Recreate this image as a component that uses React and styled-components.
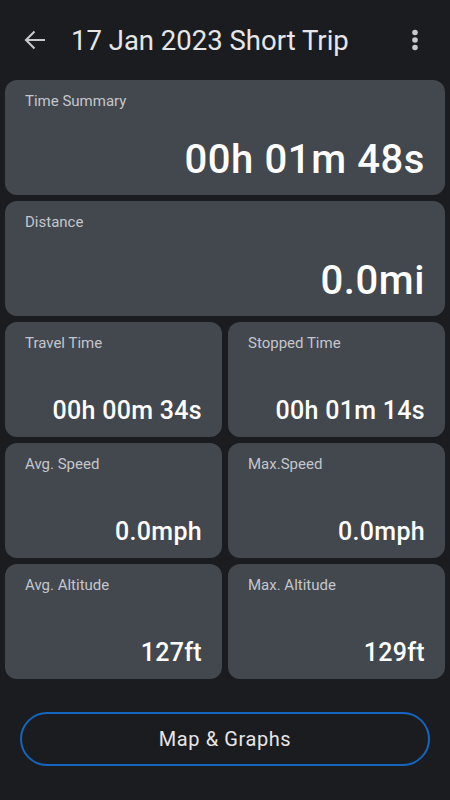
import styled, { createGlobalStyle } from "styled-components";

const GlobalStyle = createGlobalStyle`
  html, body {
    margin: 0;
    padding: 0;
    background: #1b1c1f;
  }
  body {
    font-family: Roboto, "Noto Sans", sans-serif;
  }
`;

const stats = [
  { label: "Travel Time", value: "00h 00m 34s" },
  { label: "Stopped Time", value: "00h 01m 14s" },
  { label: "Avg. Speed", value: "0.0mph" },
  { label: "Max.Speed", value: "0.0mph" },
  { label: "Avg. Altitude", value: "127ft" },
  { label: "Max. Altitude", value: "129ft" },
];

const App = () => {
  return (
    <Screen>
      <GlobalStyle />
      <TopBar>
        <IconButton aria-label="back">
          <svg width="22" height="20" viewBox="0 0 22 20" fill="none">
            <path
              d="M21 10H2.5M10.5 1.5L2 10l8.5 8.5"
              stroke="#c6c8ce"
              strokeWidth="2.1"
            />
          </svg>
        </IconButton>
        <Title>17 Jan 2023 Short Trip</Title>
        <IconButton aria-label="more">
          <svg width="8" height="24" viewBox="0 0 8 24">
            <circle cx="4" cy="4.5" r="2.8" fill="#c6c8ce" />
            <circle cx="4" cy="12" r="2.8" fill="#c6c8ce" />
            <circle cx="4" cy="19.5" r="2.8" fill="#c6c8ce" />
          </svg>
        </IconButton>
      </TopBar>

      <Cards>
        <Card $wide>
          <Label>Time Summary</Label>
          <Value $big>00h 01m 48s</Value>
        </Card>
        <Card $wide>
          <Label>Distance</Label>
          <Value $big>0.0mi</Value>
        </Card>
        {stats.map((s) => (
          <Card key={s.label}>
            <Label>{s.label}</Label>
            <Value>{s.value}</Value>
          </Card>
        ))}
      </Cards>

      <Footer>
        <OutlineButton>Map &amp; Graphs</OutlineButton>
      </Footer>
    </Screen>
  );
};

export default App;

const Screen = styled.div`
  width: 450px;
  height: 800px;
  background: #1b1c1f;
  display: flex;
  flex-direction: column;
  overflow: hidden;
`;

const TopBar = styled.header`
  height: 80px;
  display: flex;
  align-items: center;
  padding: 0 31px 0 24px;
  box-sizing: border-box;
`;

const IconButton = styled.button`
  padding: 0;
  border: none;
  background: none;
  display: flex;
  align-items: center;
  justify-content: center;
`;

const Title = styled.h1`
  flex: 1;
  margin: 0 0 0 25px;
  font-size: 27.5px;
  font-weight: 400;
  color: #e6e6e9;
  letter-spacing: 0;
`;

const Cards = styled.div`
  display: grid;
  grid-template-columns: 1fr 1fr;
  gap: 6px;
  padding: 0 5px;
`;

const Card = styled.div`
  grid-column: ${(p) => (p.$wide ? "1 / span 2" : "auto")};
  height: 115px;
  box-sizing: border-box;
  background: #43474e;
  border-radius: 12px;
  padding: 12px 20px ${(p) => (p.$wide ? "15px" : "14px")} 20px;
  display: flex;
  flex-direction: column;
  justify-content: space-between;
`;

const Label = styled.div`
  font-size: 15px;
  color: #c4c6cd;
`;

const Value = styled.div`
  align-self: flex-end;
  font-size: ${(p) => (p.$big ? "40px" : "25px")};
  letter-spacing: ${(p) => (p.$big ? "0.6px" : "0.3px")};
  font-weight: 500;
  color: #ffffff;
  line-height: 1;
`;

const Footer = styled.div`
  padding: 33px 20px 0 20px;
`;

const OutlineButton = styled.button`
  width: 100%;
  height: 54px;
  border: 2px solid #1565c0;
  border-radius: 27px;
  background: transparent;
  color: #e6e6e9;
  font-family: Roboto, "Noto Sans", sans-serif;
  font-size: 20px;
  letter-spacing: 0.6px;
`;
